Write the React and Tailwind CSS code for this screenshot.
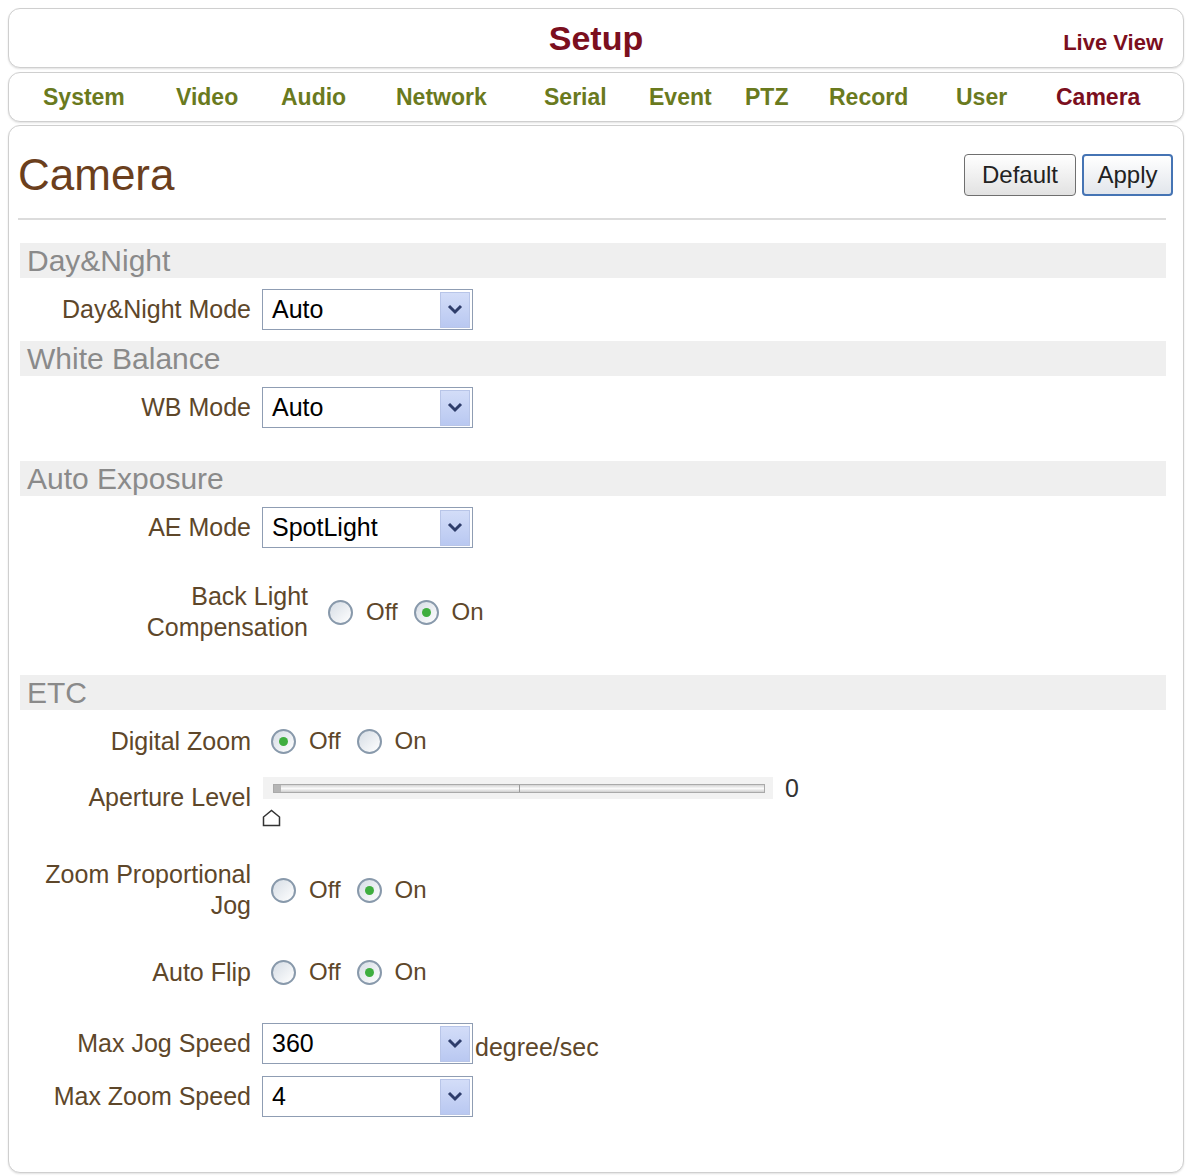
import React from 'react';

const LABEL = 'text-[25px] text-[#5e472a]';

const tabs = [
  { name: 'System', w: 'w-[133px]' },
  { name: 'Video', w: 'w-[105px]' },
  { name: 'Audio', w: 'w-[115px]' },
  { name: 'Network', w: 'w-[148px]' },
  { name: 'Serial', w: 'w-[105px]' },
  { name: 'Event', w: 'w-[96px]' },
  { name: 'PTZ', w: 'w-[84px]' },
  { name: 'Record', w: 'w-[127px]' },
  { name: 'User', w: 'w-[100px]' },
  { name: 'Camera', w: 'w-[110px]', active: true },
];

const SectionBar = ({ title, className = '' }) => (
  <div className={`ml-[2px] mr-[7px] h-[35px] bg-[#efefef] pl-[7px] text-[30px] leading-[35px] text-[#8a8a8a] ${className}`}>
    {title}
  </div>
);

const Select = ({ value }) => (
  <div className="flex h-[41px] w-[211px] items-center border border-[#8f9db3] bg-white pl-[9px] pr-[2px]">
    <span className="flex-1 text-[25px] text-black">{value}</span>
    <span className="flex h-[36px] w-[30px] items-center justify-center border border-[#b8c5e8] bg-gradient-to-b from-[#d3ddf8] to-[#b9c8f1]">
      <svg width="16" height="11" viewBox="0 0 16 11">
        <path d="M2 2 L8 8 L14 2" fill="none" stroke="#2e3d6b" strokeWidth="3" />
      </svg>
    </span>
  </div>
);

const Radio = ({ checked }) => (
  <span className="flex h-[25px] w-[25px] shrink-0 items-center justify-center rounded-full border-2 border-[#8899ab] bg-gradient-to-br from-[#d6dde5] to-white">
    {checked && <span className="h-[9px] w-[9px] rounded-full bg-[#3fae3f]" />}
  </span>
);

const OnOff = ({ on }) => (
  <div className="ml-[20px] flex items-center text-[24px] text-[#5e472a]">
    <Radio checked={!on} />
    <span className="ml-[13px]">Off</span>
    <span className="ml-[16px]">
      <Radio checked={on} />
    </span>
    <span className="ml-[13px]">On</span>
  </div>
);

const Field = ({ label, width = 'w-[231px]', className = '', children }) => (
  <div className={`ml-[2px] flex items-center ${className}`}>
    <div className={`${width} shrink-0 text-right ${LABEL}`}>{label}</div>
    {children}
  </div>
);

const Panel = ({ className = '', children }) => (
  <div className={`rounded-[12px] border border-[#cfcfcf] bg-white shadow-[0_1px_2px_rgba(0,0,0,0.12)] ${className}`}>
    {children}
  </div>
);

export default function App() {
  return (
    <div className="min-h-screen bg-white pl-[8px] pr-[9px] pt-[8px] font-['Liberation_Sans',Arial,sans-serif]">
      {/* title bar */}
      <Panel className="grid h-[60px] grid-cols-[1fr_auto_1fr] items-center px-[20px]">
        <div />
        <div className="text-[34px] font-bold text-[#7b0f1e]">Setup</div>
        <div className="mt-[8px] justify-self-end text-[22px] font-bold text-[#7b0f1e]">Live View</div>
      </Panel>

      {/* menu */}
      <Panel className="mt-[4px] flex h-[50px] items-center pl-[34px]">
        {tabs.map((t) => (
          <span
            key={t.name}
            className={`${t.w} shrink-0 text-[23px] font-bold ${t.active ? 'text-[#7b0f1e]' : 'text-[#6a7a1e]'}`}
          >
            {t.name}
          </span>
        ))}
      </Panel>

      {/* camera settings */}
      <Panel className="mt-[3px] pb-[55px] pl-[9px] pr-[10px] pt-[27px]">
        <div className="flex h-[44px] items-center justify-between">
          <h1 className="text-[44px] text-[#6b3f1d]">Camera</h1>
          <div className="flex gap-[6px]">
            <button className="h-[42px] w-[112px] rounded-[4px] border border-[#6f6f6f] bg-gradient-to-b from-white to-[#e2e2e2] text-[24px] text-[#222]">
              Default
            </button>
            <button className="h-[42px] w-[91px] rounded-[4px] border-2 border-[#4574b4] bg-gradient-to-b from-white to-[#e2e6ec] text-[24px] text-[#222]">
              Apply
            </button>
          </div>
        </div>
        <div className="mr-[7px] mt-[21px] h-[2px] bg-[#dcdcdc]" />

        <SectionBar title="Day&Night" className="mt-[23px]" />
        <Field label="Day&Night Mode" className="mt-[11px] h-[41px]">
          <div className="ml-[11px]">
            <Select value="Auto" />
          </div>
        </Field>

        <SectionBar title="White Balance" className="mt-[11px]" />
        <Field label="WB Mode" className="mt-[11px] h-[41px]">
          <div className="ml-[11px]">
            <Select value="Auto" />
          </div>
        </Field>

        <SectionBar title="Auto Exposure" className="mt-[33px]" />
        <Field label="AE Mode" className="mt-[11px] h-[41px]">
          <div className="ml-[11px]">
            <Select value="SpotLight" />
          </div>
        </Field>
        <Field
          label={<div className="leading-[31px]">Back Light<br />Compensation</div>}
          width="w-[288px]"
          className="mt-[33px] h-[62px]"
        >
          <OnOff on />
        </Field>

        <SectionBar title="ETC" className="mt-[32px]" />
        <Field label="Digital Zoom" className="mt-[16px] h-[30px] leading-[30px]">
          <OnOff on={false} />
        </Field>

        <div className="ml-[2px] mt-[21px] flex items-start">
          <div className={`mt-[5px] w-[231px] shrink-0 text-right leading-[30px] ${LABEL}`}>Aperture Level</div>
          <div className="ml-[12px] flex flex-col">
            <div className="flex h-[22px] w-[510px] items-center bg-[#f2f2f2] pl-[10px] pr-[8px]">
              <div className="relative h-[9px] flex-1 border border-[#a9a9a9] bg-gradient-to-b from-[#d4d4d4] via-[#fafafa] to-[#cfcfcf]">
                <div className="absolute left-0 top-0 h-full w-[7px] bg-[#b5b5b5]" />
                <div className="absolute left-1/2 top-0 h-full w-px bg-[#9a9a9a]" />
              </div>
            </div>
            <svg className="-ml-[1px] mt-[10px]" width="19" height="18" viewBox="0 0 19 18">
              <path d="M1.5 16.5 V8 L9.5 1.5 L17.5 8 V16.5 Z" fill="white" stroke="#333" strokeWidth="1.5" />
            </svg>
          </div>
          <span className="ml-[12px] text-[25px] leading-[22px] text-[#333]">0</span>
        </div>

        <Field
          label={<div className="leading-[31px]">Zoom Proportional<br />Jog</div>}
          className="mt-[32px] h-[62px]"
        >
          <OnOff on />
        </Field>
        <Field label="Auto Flip" className="mt-[36px] h-[30px] leading-[30px]">
          <OnOff on />
        </Field>

        <Field label="Max Jog Speed" className="mt-[36px] h-[41px]">
          <div className="ml-[11px]">
            <Select value="360" />
          </div>
          <span className={`ml-[2px] mt-[8px] ${LABEL}`}>degree/sec</span>
        </Field>
        <Field label="Max Zoom Speed" className="mt-[12px] h-[41px]">
          <div className="ml-[11px]">
            <Select value="4" />
          </div>
        </Field>
      </Panel>
    </div>
  );
}
